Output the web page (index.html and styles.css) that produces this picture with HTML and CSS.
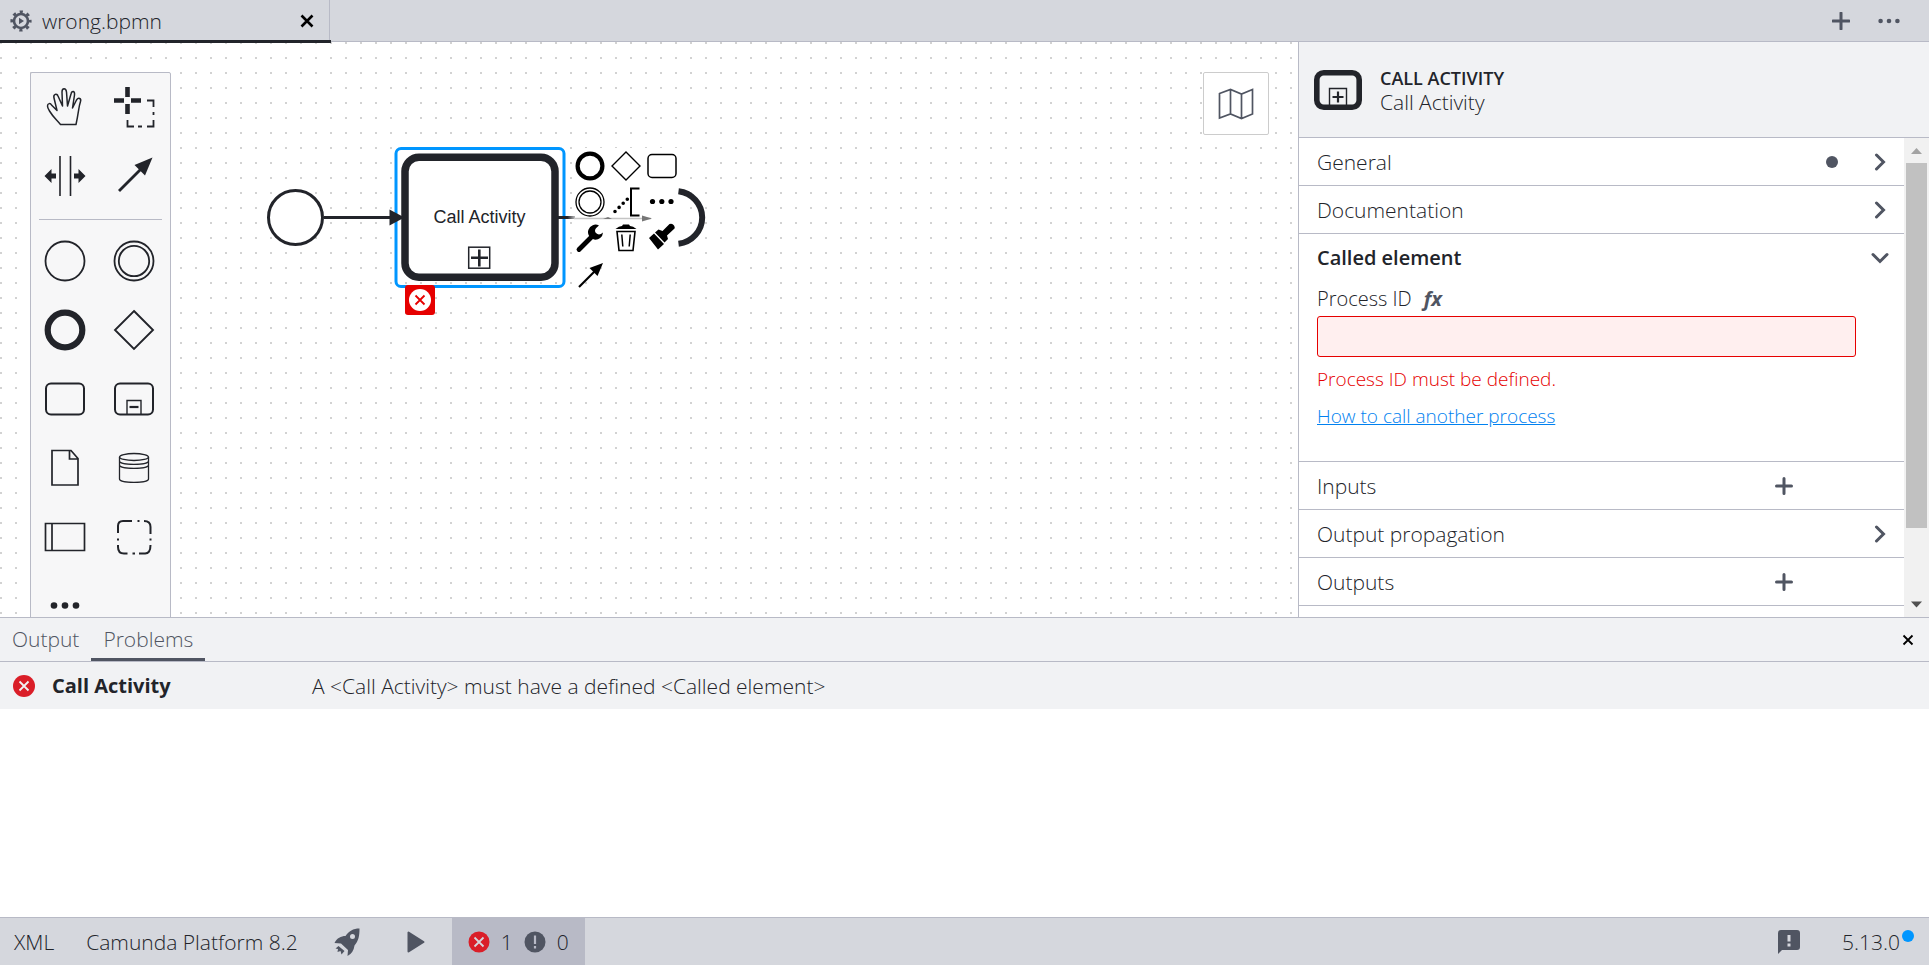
FILE: index.html
```html
<!DOCTYPE html>
<html lang="en">
<head>
<meta charset="utf-8">
<title>wrong.bpmn</title>
<link rel="stylesheet" href="styles.css">
</head>
<body>
<div class="app">
  <header class="tabbar">
    <div class="tab">
      <svg class="tab-icon" width="22" height="22" viewBox="0 0 22 22"><circle cx="11" cy="11" r="7" fill="none" stroke="currentColor" stroke-width="2.6"/><circle cx="11" cy="11" r="9.2" fill="none" stroke="currentColor" stroke-width="2.8" stroke-dasharray="3.2 4.026" stroke-dashoffset="1.6"/><path d="M9 7.8v6.4l5-3.2z" fill="currentColor"/></svg>
      <span class="tab-name">wrong.bpmn</span>
      <button class="icon-btn tab-close" aria-label="Close tab"><svg width="14" height="14" viewBox="0 0 14 14"><path d="M1.5 1.5l11 11M12.500 1.500l-11 11" stroke="#000" stroke-width="2.6"/></svg></button>
    </div>
    <div class="tab-actions">
      <button class="icon-btn" aria-label="New tab"><svg width="18" height="18" viewBox="0 0 18 18"><path d="M9 1v16M1 9h16" stroke="currentColor" stroke-width="3" stroke-linecap="round"/></svg></button>
      <button class="icon-btn" aria-label="More"><svg width="22" height="6" viewBox="0 0 22 6" fill="currentColor"><circle cx="2.600" cy="3" r="2.300"/><circle cx="11" cy="3" r="2.300"/><circle cx="19.400" cy="3" r="2.300"/></svg></button>
    </div>
  </header>

  <main class="workspace">
    <section class="canvas">
      <svg class="diagram" width="720" height="320" viewBox="0 42 720 320">
        <defs><linearGradient id="fade" x1="558" x2="575" y1="0" y2="0" gradientUnits="userSpaceOnUse"><stop offset=".55" stop-color="#22242a"/><stop offset="1" stop-color="#bbb"/></linearGradient></defs>
        <circle cx="295.500" cy="217.500" r="27" fill="#fff" stroke="#22242a" stroke-width="3"/>
        <path d="M324 217.500h68" stroke="#22242a" stroke-width="3"/>
        <rect x="396" y="148.500" width="168" height="138" rx="5" fill="none" stroke="#0096ff" stroke-width="3"/>
        <rect x="405" y="157.200" width="150" height="120" rx="14" fill="#fff" stroke="#22242a" stroke-width="7.500"/>
        <path d="M389.500 209.500v16l15-8z" fill="#22242a"/>
        <text x="479.500" y="223" text-anchor="middle" class="task-label">Call Activity</text>
        <rect x="468.700" y="247.200" width="21" height="21" fill="#fff" stroke="#22242a" stroke-width="1.500"/>
        <path d="M471 257.700h17M479.300 249.500v17" stroke="#22242a" stroke-width="2.600"/>
        <path d="M572 148h107v108h-107z" fill="#fff"/>
        <path d="M558 216h17v3h-17z" fill="url(#fade)"/>
        <path d="M574 218.500h77" stroke="#c4c4c4" stroke-width="1.500"/>
        <path d="M603 219l5-2 4 2zM642 215.500l10 3-10 3z" fill="#777"/>
        <path d="M678.500 191.200A27 26.500 0 0 1 678.500 243.800" fill="none" stroke="#22242a" stroke-width="6"/>
      </svg>

      <button class="error-badge" aria-label="1 error"><svg width="22" height="22" viewBox="0 0 22 22"><circle cx="11" cy="11" r="11" fill="#fff"/><path d="M6.500 6.500l9 9M15.500 6.500l-9 9" stroke="#e60000" stroke-width="1.800"/></svg></button>

      <div class="context-pad">
        <button aria-label="Append end event"><svg width="30" height="30" viewBox="0 0 30 30"><circle cx="15" cy="15" r="12.400" fill="none" stroke="#000" stroke-width="4.200"/></svg></button>
        <button aria-label="Append gateway"><svg width="30" height="30" viewBox="0 0 30 30"><path d="M15 1l14 14-14 14L1 15z" fill="none" stroke="#000" stroke-width="1.400"/></svg></button>
        <button aria-label="Append task"><svg width="30" height="30" viewBox="0 0 30 30"><rect x="1" y="3.500" width="28" height="23" rx="4" fill="none" stroke="#000" stroke-width="1.500"/></svg></button>
        <button aria-label="Append intermediate event"><svg width="30" height="30" viewBox="0 0 30 30" fill="none" stroke="#000" stroke-width="1.300"><circle cx="15" cy="15" r="14"/><circle cx="15" cy="15" r="11"/></svg></button>
        <button aria-label="Add text annotation"><svg width="30" height="30" viewBox="0 0 30 30"><path d="M28.500 1.500h-8.500v27h8.500" fill="none" stroke="#000" stroke-width="2"/><path d="M4 24.500L17 11.500" stroke="#000" stroke-width="3.600" stroke-linecap="round" stroke-dasharray="0 5.800"/></svg></button>
        <button aria-label="Append element"><svg width="30" height="30" viewBox="0 0 30 30"><circle cx="5.500" cy="14.500" r="2.600"/><circle cx="14.800" cy="14.500" r="2.600"/><circle cx="24" cy="14.500" r="2.600"/></svg></button>
        <button aria-label="Change type"><svg width="30" height="30" viewBox="0 0 30 30"><path d="M4 26.500l12-12" stroke="#000" stroke-width="4.800" stroke-linecap="round"/><path d="M24 2.500A7.500 7.500 0 1 0 28 9.500q-4 3.500-7 .5t3-7.500z"/></svg></button>
        <button aria-label="Remove"><svg width="30" height="30" viewBox="0 0 30 30"><path d="M4.500 6Q8 3 11 3l1-1.500h6L19 3q3 0 6.500 3z"/><path d="M6 8.500h18l-2 19H8z" fill="none" stroke="#000" stroke-width="1.600"/><path d="M10.800 11.500l1 12M19.200 11.500l-1 12" stroke="#000" stroke-width="1.500"/></svg></button>
        <button aria-label="Set color"><svg width="30" height="30" viewBox="0 0 30 30"><path d="M2 15l5-4.500L17 21l-6 5.500zM8 9.500l3.500-3 4 1.500 7-7q3-1 4.500 1.500t0 3.500l-7 6.500 1 3.500-3.500 3.500z"/></svg></button>
        <button aria-label="Connect"><svg width="30" height="30" viewBox="0 0 30 30"><path d="M4 28l17-17" stroke="#000" stroke-width="2.200"/><path d="M28 4l-5.500 13-8-8z"/></svg></button>
      </div>

      <div class="palette">
        <div class="palette-group">
          <button aria-label="Hand tool"><svg width="42" height="42" viewBox="0 0 42 42"><path d="M16.500 38.500C13 34 9 31 5.500 25q-2-3-2-5c0-3 3-3 4-1l5.500 5.500L10 12c-1-4 3-5 4-2l4.500 10L18 6c0-4.500 4-4.500 4.500 0l1 14 3.500-12c1-4 4-3 3.500 1L28.500 22l4-8c2-3 5-1.500 4 1.500-2 6-1.500 9-4.500 23z" fill="none" stroke="currentColor" stroke-width="1.500" stroke-linejoin="round"/></svg></button>
          <button aria-label="Lasso tool"><svg width="42" height="42" viewBox="0 0 42 42" fill="none" stroke="currentColor"><path d="M14.500 1v10M14.500 18v10M1 14.500h10M18 14.500h10" stroke-width="4.600"/><path d="M34 14.500h6.500V21M40.500 26v3M40.500 34v6.500H34M29 40.500h-4M21 40.500h-6.500V34" stroke-width="1.800"/></svg></button>
          <button aria-label="Space tool"><svg width="42" height="42" viewBox="0 0 42 42"><path d="M16 1v40M26.500 1v40" stroke="currentColor" stroke-width="1.600"/><path d="M.5 21l7-7v4.500H12v5H7.500V28zM41.500 21l-7-7v4.500H30v5h4.500V28z" fill="currentColor"/></svg></button>
          <button aria-label="Connect tool"><svg width="42" height="42" viewBox="0 0 42 42"><path d="M6 36l24-24" stroke="currentColor" stroke-width="2.800"/><path d="M39.500 2.500L32 20.500 21.500 10z" fill="currentColor"/></svg></button>
        </div>
        <hr class="palette-line">
        <div class="palette-group">
          <button aria-label="Start event"><svg width="42" height="42" viewBox="0 0 42 42"><circle cx="21" cy="21" r="19.500" fill="none" stroke="currentColor" stroke-width="1.800"/></svg></button>
          <button aria-label="Intermediate event"><svg width="42" height="42" viewBox="0 0 42 42" fill="none" stroke="currentColor" stroke-width="1.800"><circle cx="21" cy="21" r="19.500"/><circle cx="21" cy="21" r="15.200"/></svg></button>
          <button aria-label="End event"><svg width="42" height="42" viewBox="0 0 42 42"><circle cx="21" cy="21" r="17.300" fill="none" stroke="currentColor" stroke-width="6.200"/></svg></button>
          <button aria-label="Gateway"><svg width="42" height="42" viewBox="0 0 42 42"><path d="M21 2l19 19-19 19L2 21z" fill="none" stroke="currentColor" stroke-width="1.900"/></svg></button>
          <button aria-label="Task"><svg width="42" height="42" viewBox="0 0 42 42"><rect x="2" y="5.500" width="38" height="31" rx="5" fill="none" stroke="currentColor" stroke-width="2"/></svg></button>
          <button aria-label="Sub-process"><svg width="42" height="42" viewBox="0 0 42 42" fill="none" stroke="currentColor"><rect x="2" y="5.500" width="38" height="31" rx="5" stroke-width="2"/><path d="M14 36V22.500h14V36" stroke-width="1.400"/><path d="M16.500 29h9" stroke-width="2.200"/></svg></button>
          <button aria-label="Data object"><svg width="42" height="42" viewBox="0 0 42 42"><path d="M8 3.500h19l7 8V38H8zM25.500 3.500V12H34" fill="none" stroke="currentColor" stroke-width="1.700"/></svg></button>
          <button aria-label="Data store"><svg width="42" height="42" viewBox="0 0 42 42" fill="none" stroke="currentColor" stroke-width="1.300"><ellipse cx="21" cy="10" rx="14.500" ry="3.500"/><path d="M6.500 10v22c0 4.500 29 4.500 29 0V10M6.500 14c0 4.500 29 4.500 29 0M6.500 18c0 4.500 29 4.500 29 0"/></svg></button>
          <button aria-label="Participant"><svg width="42" height="42" viewBox="0 0 42 42"><path d="M1.500 7.500h39v27h-39zM8 7.500v27" fill="none" stroke="currentColor" stroke-width="1.700"/></svg></button>
          <button aria-label="Group"><svg width="42" height="42" viewBox="0 0 42 42" fill="none" stroke="currentColor" stroke-width="2"><path d="M5 17V10q0-5 5-5h9M24.500 5h2M31 5q6.500 0 6.500 6v7M37.500 22.500v2M37.500 29q0 9-6 8.500h-5.500M22 37.500h-2.500M14.500 37.500H11Q5 37.500 5 31v-2M5 24.500v-2"/></svg></button>
          <button aria-label="More elements"><svg width="42" height="42" viewBox="0 0 42 42" fill="currentColor"><circle cx="10" cy="20.500" r="3.300"/><circle cx="21" cy="20.500" r="3.300"/><circle cx="32" cy="20.500" r="3.300"/></svg></button>
        </div>
      </div>

      <button class="minimap" aria-label="Toggle minimap"><svg width="36" height="32" viewBox="0 0 36 32"><path d="M1.500 5.500L12.500 1.500 23.500 6 34.500 1.500V26L23.500 30.500 12.500 26 1.500 30z M12.500 1.500V26M23.500 6v24.500" fill="none" stroke="currentColor" stroke-width="1.700"/></svg></button>
    </section>

    <aside class="properties">
      <div class="prop-header">
        <svg width="48" height="40" viewBox="0 0 48 40" fill="none" stroke="#22242a"><rect x="2.800" y="2.800" width="42.400" height="34.400" rx="7" stroke-width="5.600"/><path d="M15.500 36V18.500h17V36" stroke-width="1.400"/><path d="M24 21.500v11M18.500 27h11" stroke-width="2.200"/></svg>
        <div class="prop-title"><strong>CALL ACTIVITY</strong><span>Call Activity</span></div>
      </div>
      <div class="prop-body">
        <div class="groups">
          <section class="group"><button class="group-head"><span class="group-name">General</span><span class="dot"></span><svg class="chev" width="18" height="18" viewBox="0 0 18 18"><path d="M5.500 2l7 7-7 7"/></svg></button></section>
          <section class="group"><button class="group-head"><span class="group-name">Documentation</span><svg class="chev" width="18" height="18" viewBox="0 0 18 18"><path d="M5.500 2l7 7-7 7"/></svg></button></section>
          <section class="group">
            <button class="group-head open"><span class="group-name">Called element</span><svg class="chev" width="18" height="18" viewBox="0 0 18 18"><path d="M2 5.500l7 7 7-7"/></svg></button>
            <div class="entry">
              <div class="label-row"><label for="process-id">Process ID</label><button class="fx" aria-label="Toggle expression">fx</button></div>
              <input id="process-id" class="field" type="text">
              <p class="error-text">Process ID must be defined.</p>
              <a class="help" href="#help">How to call another process</a>
            </div>
          </section>
          <section class="group"><button class="group-head"><span class="group-name">Inputs</span><svg class="plus" width="18" height="18" viewBox="0 0 18 18"><path d="M9 1.500v15M1.500 9h15"/></svg></button></section>
          <section class="group"><button class="group-head"><span class="group-name">Output propagation</span><svg class="chev" width="18" height="18" viewBox="0 0 18 18"><path d="M5.500 2l7 7-7 7"/></svg></button></section>
          <section class="group"><button class="group-head"><span class="group-name">Outputs</span><svg class="plus" width="18" height="18" viewBox="0 0 18 18"><path d="M9 1.500v15M1.500 9h15"/></svg></button></section>
        </div>
        <div class="scrollbar">
          <svg width="25" height="25" viewBox="0 0 25 25"><path d="M7 16l5.500-6 5.500 6z" fill="#a3a3a3"/></svg>
          <div class="track"><div class="thumb"></div></div>
          <svg width="25" height="25" viewBox="0 0 25 25"><path d="M7 9.500l5.500 6 5.500-6z" fill="#505050"/></svg>
        </div>
      </div>
    </aside>
  </main>

  <section class="log">
    <nav class="log-tabs">
      <button class="log-tab">Output</button>
      <button class="log-tab active">Problems</button>
      <button class="icon-btn log-close" aria-label="Close panel"><svg width="12" height="12" viewBox="0 0 12 12"><path d="M1.500 1.500l9 9M10.500 1.500l-9 9" stroke="#000" stroke-width="1.800"/></svg></button>
    </nav>
    <div class="problem">
      <svg width="22" height="22" viewBox="0 0 22 22"><circle cx="11" cy="11" r="11" fill="#da1e28"/><path d="M6.500 6.500l9 9M15.500 6.500l-9 9" stroke="#f1f2f4" stroke-width="1.800"/></svg>
      <strong class="problem-name">Call Activity</strong>
      <span>A &lt;Call Activity&gt; must have a defined &lt;Called element&gt;</span>
    </div>
  </section>

  <footer class="status">
    <button class="status-btn xml">XML</button>
    <button class="status-btn platform">Camunda Platform 8.2</button>
    <button class="icon-btn rocket" aria-label="Deploy"><svg width="26" height="28" viewBox="0 0 26 28" fill="currentColor"><path fill-rule="evenodd" d="M25.500.5C19 .5 15 3 11.500 8 7 8 3 10 .5 15l6.500.5L14 22l-.5 6q6-3 7-10.500C24.500 13 25.500 8 25.500.500zM18.500 6a2.500 2.500 0 1 1 0 5 2.500 2.500 0 1 1 0-5z"/><path d="M4.500 18l-3 2.500 2.500.5-.5 3 3-1 1 3.500 3-3.500z"/></svg></button>
    <button class="icon-btn play" aria-label="Start process"><svg width="18" height="22" viewBox="0 0 18 22"><path d="M1.500 1.500v19L16.500 11z" fill="currentColor" stroke="currentColor" stroke-width="2" stroke-linejoin="round"/></svg></button>
    <button class="status-btn counts">
      <svg width="22" height="22" viewBox="0 0 22 22"><circle cx="11" cy="11" r="10.500" fill="#da1e28"/><path d="M6.500 6.500l9 9M15.500 6.500l-9 9" stroke="#d5d7dd" stroke-width="1.800"/></svg>
      <span>1</span>
      <svg width="22" height="22" viewBox="0 0 22 22"><circle cx="11" cy="11" r="10.500" fill="#505562"/><path d="M11 4.500v8.500M11 15v2.500" stroke="#b8bac6" stroke-width="2.200"/></svg>
      <span>0</span>
    </button>
    <button class="icon-btn feedback" aria-label="Feedback"><svg width="22" height="24" viewBox="0 0 22 24"><path d="M3 0h16a3 3 0 0 1 3 3v14a3 3 0 0 1-3 3H4l-4 4V3a3 3 0 0 1 3-3z" fill="currentColor"/><path d="M11 5v6.500M11 13.500v3" stroke="#d5d7dd" stroke-width="3"/></svg></button>
    <button class="status-btn version">5.13.0<span class="update"></span></button>
  </footer>
</div>
</body>
</html>
```
FILE: styles.css
```css
* { box-sizing: border-box; }
body {
  margin: 0;
  font: 300 21px/26px "Open Sans", "Noto Sans", sans-serif;
  color: #22242a;
}
button {
  display: flex;
  align-items: center;
  justify-content: center;
  margin: 0;
  padding: 0;
  border: 0;
  background: none;
  font: inherit;
  color: inherit;
}
svg { display: block; flex: none; }
.icon-btn { color: #505562; }

.app { display: flex; flex-direction: column; height: 100vh; overflow: hidden; }

.tabbar {
  display: flex;
  flex: none;
  justify-content: space-between;
  height: 42px;
  background: #d5d7dd;
  border-bottom: 1px solid #b8bac6;
}
.tab {
  display: flex;
  align-items: center;
  z-index: 1;
  width: 331px;
  height: 43px;
  padding: 0 17px 2px 10px;
  gap: 10px;
  background:
    linear-gradient(#22242a, #22242a) 0 100% / 100% 3px no-repeat,
    linear-gradient(#b8bac6, #b8bac6) 329px 0 / 1px 100% no-repeat;
}
.tab-icon { color: #505562; }
.tab-name { flex: 1; }
.tab-actions { display: flex; align-items: center; gap: 28px; padding-right: 29px; }

.workspace { display: flex; flex: 1; min-height: 0; }
.canvas {
  position: relative;
  flex: 1;
  min-width: 0;
  overflow: hidden;
  background: #fff radial-gradient(circle at 1px 1px, #d2d2d2 1px, transparent 1px) 0 0 / 15px 15px;
}
.diagram { position: absolute; left: 0; top: 0; }
.task-label { font: 400 18px "Liberation Sans", Arial, sans-serif; fill: #22242a; }
.error-badge {
  position: absolute;
  left: 405px;
  top: 243px;
  width: 30px;
  height: 30px;
  border-radius: 3px;
  background: #e60000;
}
.context-pad {
  position: absolute;
  left: 572px;
  top: 106px;
  display: grid;
  grid-template-columns: repeat(3, 36px);
  grid-auto-rows: 36px;
}
.palette {
  position: absolute;
  left: 30px;
  top: 30px;
  width: 141px;
  border: 1px solid #b8bac6;
  border-radius: 2px;
  background: #f7f7f8;
}
.palette-group { display: grid; grid-template-columns: 69px 69px; grid-auto-rows: 69px; }
.palette-group button { padding: 0 1px 1px 0; }
.palette-line { margin: 8px 8px 7px; height: 1px; border: 0; background: #b8bac6; }
.minimap {
  position: absolute;
  right: 29px;
  top: 30px;
  width: 66px;
  height: 63px;
  border: 1px solid #ccc;
  border-radius: 2px;
  background: #fff;
  color: #505562;
}

.properties {
  display: flex;
  flex: none;
  flex-direction: column;
  width: 631px;
  border-left: 1px solid #b8bac6;
  background: #fff;
}
.prop-header {
  display: flex;
  flex: none;
  align-items: center;
  gap: 18px;
  height: 96px;
  padding: 0 15px;
  background: #f1f2f4;
  border-bottom: 1px solid #b8bac6;
}
.prop-title { display: flex; flex-direction: column; line-height: 24px; }
.prop-title strong { font-size: 18px; font-weight: 600; }
.prop-body { display: flex; flex: 1; min-height: 0; }
.groups { flex: 1; min-width: 0; overflow: hidden; }
.group { border-bottom: 1px solid #b8bac6; }
.group-head {
  width: 100%;
  height: 47px;
  padding: 0 15px 0 18px;
}
.group-name { flex: 1; text-align: left; }
.open { font-size: 20px; font-weight: 600; }
.dot { width: 12px; height: 12px; margin-right: 33px; border-radius: 50%; background: #505562; }
.chev, .plus { fill: none; stroke: #505562; stroke-width: 3; stroke-linecap: round; }
.plus { margin-right: 96px; }
.entry { padding: 4px 48px 32px 18px; font-size: 19px; }
.label-row { display: flex; align-items: center; gap: 12px; height: 28px; margin-bottom: 3px; font-size: 20px; }
.fx { font: italic 700 20px/24px "Noto Sans", sans-serif; color: #505562; }
.field {
  display: block;
  width: 100%;
  height: 41px;
  padding: 0 8px;
  border: 1px solid #e60000;
  border-radius: 3px;
  background: #ffefef;
  font: inherit;
}
.error-text { margin: 9px 0 11px; color: #e60000; }
.help { color: #0081f0; }
.scrollbar { display: flex; flex: none; flex-direction: column; width: 25px; background: #f1f1f1; }
.track { flex: 1; padding: 0 2px; }
.thumb { height: 85%; background: #c1c1c1; }

.log { flex: none; height: 300px; border-top: 1px solid #b8bac6; background: #fff; }
.log-tabs {
  display: flex;
  height: 44px;
  background: #f1f2f4;
  border-bottom: 1px solid #b8bac6;
  color: #505562;
}
.log-tab { padding: 2px 12px 0; border-bottom: 3px solid transparent; }
.active { border-color: #505562; }
.log-close { margin-left: auto; padding-right: 15px; }
.problem { display: flex; align-items: center; height: 47px; padding-left: 13px; background: #f1f2f4; }
.problem-name { width: 260px; margin-left: 17px; font-size: 20px; font-weight: 700; }
.problem > span { flex: 1; }

.status {
  display: flex;
  flex: none;
  align-items: stretch;
  height: 48px;
  border-top: 1px solid #b8bac6;
  background: #d5d7dd;
}
.xml { padding: 0 16px 0 14px; }
.platform { padding: 0 16px; }
.rocket { padding: 0 20px; }
.play { padding: 0 27px; }
.counts { gap: 11px; padding: 0 16px; background: #b8bac6; }
.feedback { margin-left: auto; padding-right: 42px; }
.version { padding-right: 15px; }
.update { width: 12px; height: 12px; margin: 0 0 12px 2px; border-radius: 50%; background: #0096ff; }
```
